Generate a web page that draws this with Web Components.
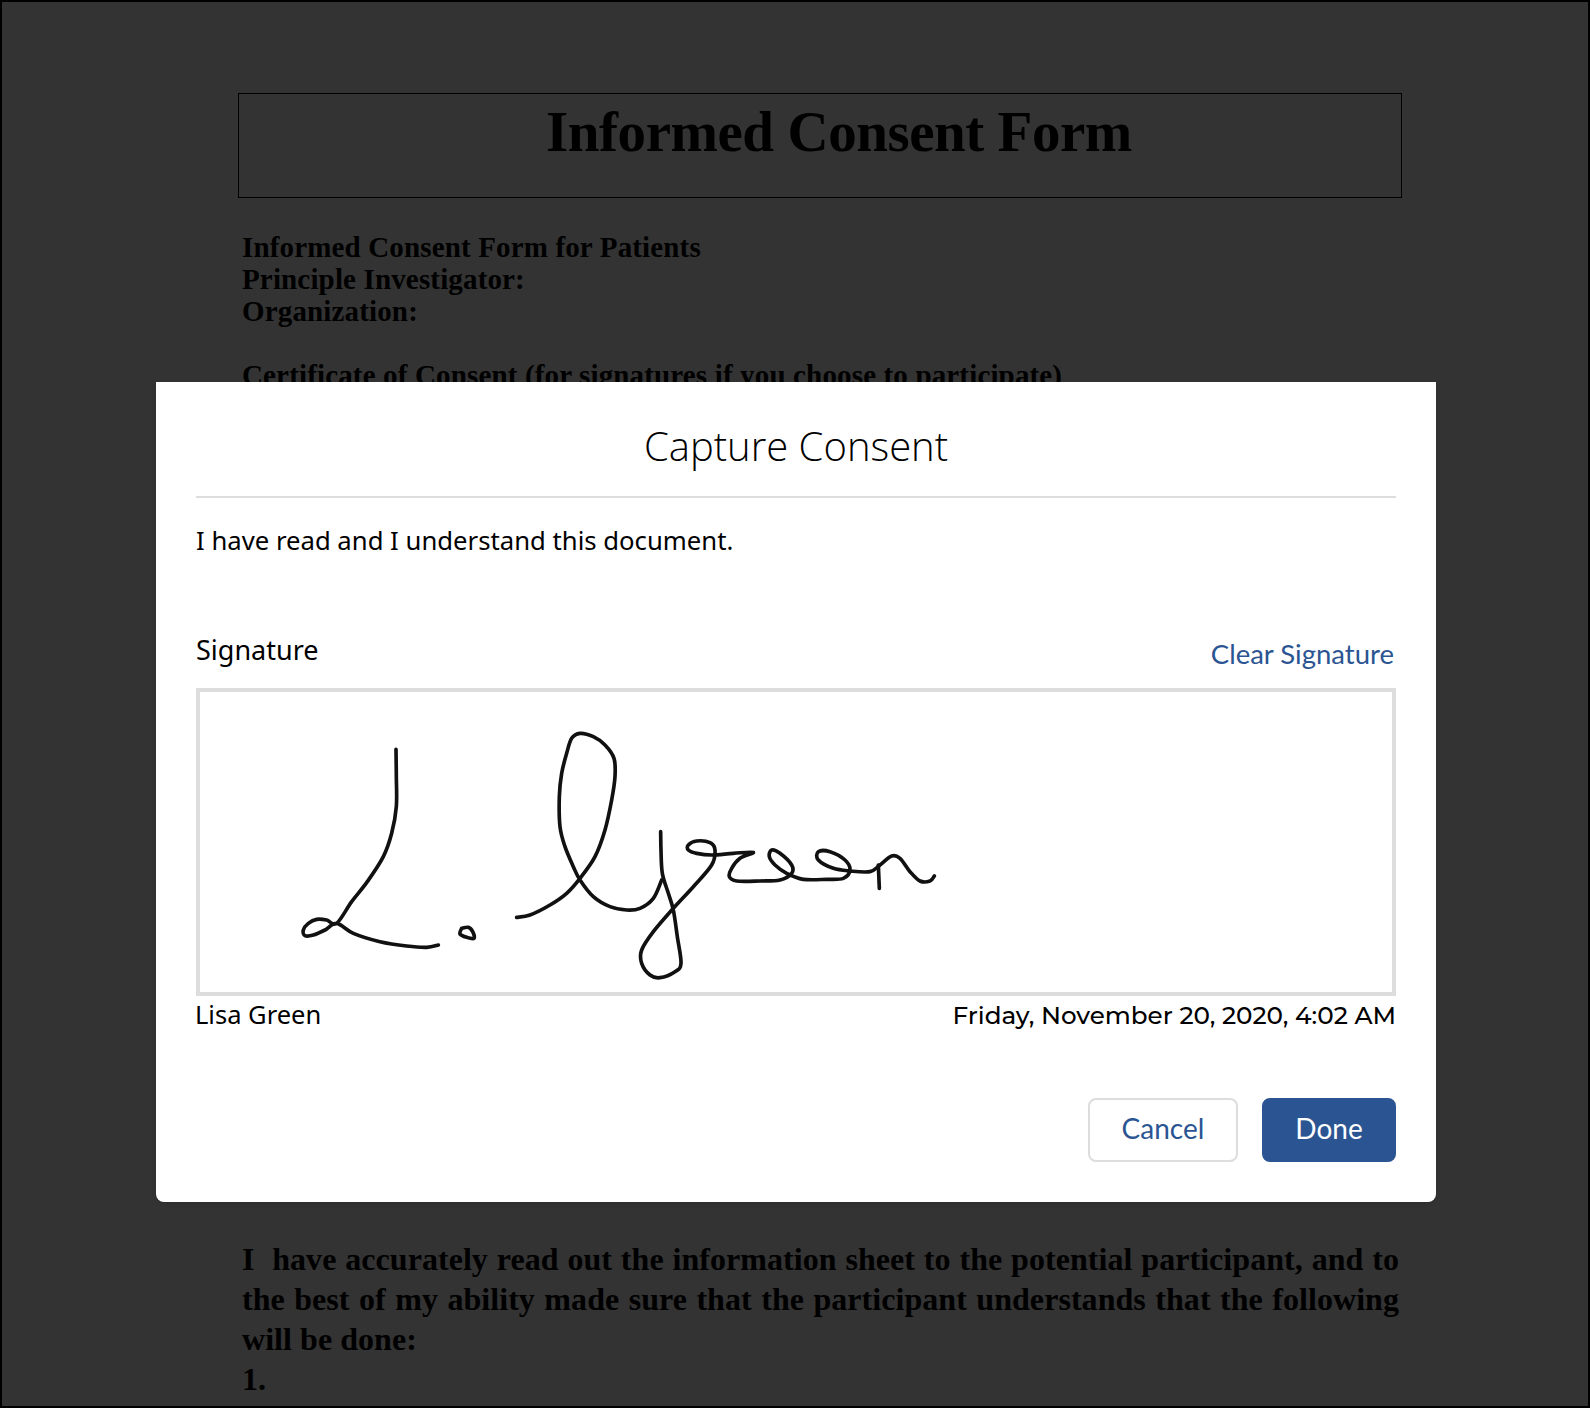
<!DOCTYPE html>
<html lang="en"><head><meta charset="utf-8"><title>Capture Consent</title>
<style>html,body{margin:0;padding:0;background:#333}</style></head>
<body>
<consent-frame>
  <form-sheet></form-sheet>
  <consent-modal slot="overlay"></consent-modal>
</consent-frame>
<script>
function def(name, html, init){
  customElements.define(name, class extends HTMLElement{
    constructor(){super();const r=this.attachShadow({mode:'open'});r.innerHTML=html;if(init)init(r,this);}
  });
}
def('consent-frame',`<style>
:host{display:block;position:relative;box-sizing:border-box;width:1590px;height:1408px;background:#333;border:2px solid #000;overflow:hidden}
</style><slot></slot><slot name="overlay"></slot>`);

def('form-sheet',`<style>
:host{display:block;padding:91px 186px 0 236px;color:#000;font-family:"Liberation Serif","Times New Roman",serif;font-weight:700}
.title{box-sizing:border-box;height:105px;border:1.5px solid #000;padding:5px 0 0 38px;margin:0;text-align:center;font-size:57px;line-height:66px;font-weight:700;letter-spacing:-.45px}
.meta{margin:33px 0 0 4px;font-size:29px;line-height:32px;letter-spacing:.15px}
.meta div{min-height:32px}
.body{margin:848px 0 0 4px;font-size:32px;line-height:40px;width:1157px;letter-spacing:.05px}
.body div{white-space:nowrap;text-align:justify;text-align-last:justify}
.body div.l{text-align-last:left}
</style>
<h1 class="title">Informed Consent Form</h1>
<div class="meta"><div>Informed Consent Form for Patients</div><div>Principle Investigator:</div><div>Organization:</div><div></div><div>Certificate of Consent (for signatures if you choose to participate)</div></div>
<div class="body"><div>I&nbsp; have accurately read out the information sheet to the potential participant, and to</div><div>the best of my ability made sure that the participant understands that the following</div><div class="l">will be done:</div><div class="l">1.</div></div>`);

def('ui-button',`<style>
:host{display:inline-flex;align-items:center;justify-content:center;box-sizing:border-box;height:64px;padding-bottom:4px;border-radius:8px;font-family:Lato,"Open Sans",sans-serif;font-size:28px;border:2px solid #ddd;background:#fff;color:#2b5592;width:150px}
:host([primary]){background:#2b5592;border-color:#2b5592;color:#fff;width:134px}
</style><slot></slot>`);

def('signature-pad',`<style>
:host{display:block;box-sizing:border-box;height:308px;border:4px solid #ddd;background:#fff}
svg{display:block;width:1192px;height:300px}
path{fill:none;stroke:#111;stroke-width:11;stroke-linecap:round;stroke-linejoin:round}
</style><svg viewBox="200 692 1192 300" role="img" aria-label="Signature"><g id="a" transform="translate(280 710) scale(.33333)"></g><g id="b" transform="translate(600 800) scale(.33333)"></g></svg>`,
(r)=>{
  const smooth=p=>{let d=`M${p[0][0]} ${p[0][1]}`;for(let i=0;i<p.length-1;i++){const a=p[i-1]||p[i],b=p[i],c=p[i+1],e=p[i+2]||c;
    d+=`C${(b[0]+(c[0]-a[0])/6).toFixed(1)} ${(b[1]+(c[1]-a[1])/6).toFixed(1)} ${(c[0]-(e[0]-b[0])/6).toFixed(1)} ${(c[1]-(e[1]-b[1])/6).toFixed(1)} ${c[0]} ${c[1]}`;}return d;};
  const A=[
   [[348,118],[349,200],[349,290],[335,370],[310,440],[262,515],[215,575],[170,640],[140,630],[110,628],[85,640],[70,660],[75,677],[100,675],[135,660],[170,640],[220,670],[300,695],[380,708],[440,712],[475,705]],
   [[545,655],[565,652],[578,665],[582,685],[560,682],[540,672],[545,655]],
   [[710,622],[750,615],[810,585],[860,550],[900,505],[945,440],[975,360],[995,270],[1005,200],[1002,145],[975,105],[940,80],[900,70],[875,85],[860,130],[845,190],[838,260],[840,350],[855,410],[880,470],[900,510],[940,560],[990,590],[1040,600],[1080,595],[1120,565],[1145,510]]];
  const B=[
   [[182,95],[183,150],[187,220],[205,280],[220,330],[232,410],[243,490],[225,515],[180,533],[150,525],[125,490],[125,450],[160,395],[220,325],[280,260],[335,195],[345,150],[330,128],[290,123],[265,135],[265,150],[290,160],[335,165],[400,160],[460,157],[420,175],[395,205],[388,230],[410,243],[480,243],[540,240],[575,220],[575,195],[540,160],[515,150],[508,170],[525,195],[560,220],[610,238],[680,238],[730,235],[750,210],[735,180],[690,155],[655,155],[655,180],[700,205],[750,213],[810,215],[840,195],[875,168],[900,175],[930,215],[960,243],[990,243],[1003,228]],
   [[835,195],[838,265]]];
  r.getElementById('a').innerHTML=A.map(p=>`<path d="${smooth(p)}"/>`).join('');
  r.getElementById('b').innerHTML=B.map(p=>`<path d="${smooth(p)}"/>`).join('');
});

def('consent-modal',`<style>
:host{position:absolute;left:154px;top:380px;box-sizing:border-box;width:1280px;height:820px;background:#fff;border-radius:0 0 8px 8px;padding:0 40px;color:#000;font-family:"Noto Sans","Open Sans",sans-serif;box-shadow:0 2px 4px rgba(0,0,0,.1)}
header{box-sizing:content-box;height:98px;padding:14px 0 2px;border-bottom:2px solid #ddd;display:flex;align-items:center;justify-content:center;font-family:"Open Sans",sans-serif;font-weight:300;font-size:40px}
.msg{margin:0;padding-top:25px;font-size:25.7px;line-height:36px}
.lab{display:flex;justify-content:space-between;align-items:flex-end;margin-top:71px;height:46px;margin-bottom:12px}
.lab .s{font-size:27px;line-height:36px;align-self:flex-start;margin-top:2px}
.lab .c{color:#2b5592;font-family:Lato,sans-serif;font-size:27.5px;line-height:36px;margin:0 2px 4px 0}
.foot{display:flex;justify-content:space-between;line-height:36px;margin-top:1px}
.foot .d{font-family:Montserrat,"Noto Sans",sans-serif;font-size:24.65px;font-weight:500}
.foot .n{font-size:25.5px;margin:-1px 0 0 -1px}
.acts{display:flex;justify-content:flex-end;gap:24px;margin-top:65px}
</style>
<header>Capture Consent</header>
<p class="msg">I have read and I understand this document.</p>
<div class="lab"><span class="s">Signature</span><span class="c">Clear Signature</span></div>
<signature-pad></signature-pad>
<div class="foot"><span class="n">Lisa Green</span><span class="d">Friday, November 20, 2020, 4:02 AM</span></div>
<div class="acts"><ui-button>Cancel</ui-button><ui-button primary>Done</ui-button></div>`);
</script>
</body></html>
